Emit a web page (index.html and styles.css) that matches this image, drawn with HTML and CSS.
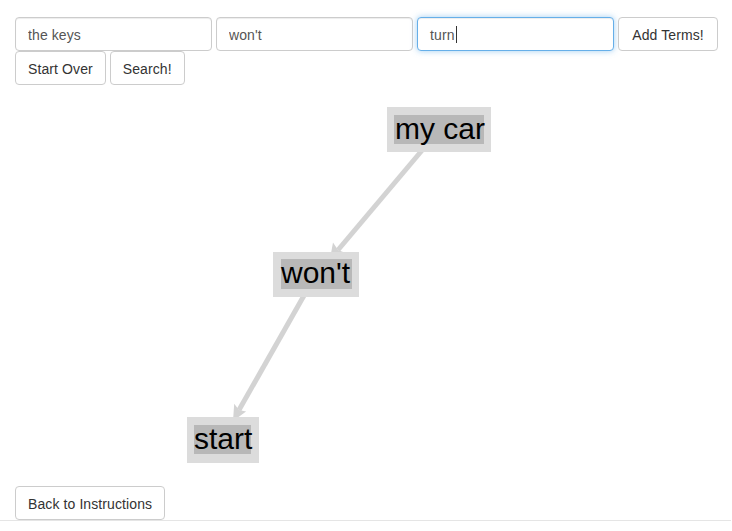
FILE: index.html
```html
<!DOCTYPE html>
<html>
<head>
<meta charset="utf-8">
<link rel="stylesheet" href="styles.css">
</head>
<body>
<div class="controls">
  <div class="row terms">
    <input class="field" type="text" value="the keys">
    <input class="field" type="text" value="won't">
    <div class="field focused">turn<span class="caret"></span></div>
    <button class="btn wide">Add Terms!</button>
  </div>
  <div class="row actions">
    <button class="btn">Start Over</button>
    <button class="btn">Search!</button>
  </div>
</div>
<svg class="graph" width="732" height="401" viewBox="0 85 732 401" xmlns="http://www.w3.org/2000/svg">
  <g class="edge">
    <line x1="424" y1="148" x2="338" y2="250"/>
    <polygon points="330,259 345,252.8 338,250 333,242.5"/>
    <line x1="306" y1="292" x2="239" y2="410"/>
    <polygon points="233,421 246.1,411.4 239,410 234.2,403.7"/>
  </g>
  <g class="node">
    <rect class="outer" x="387" y="107" width="104" height="45"/>
    <rect class="inner" x="394" y="115" width="90" height="29"/>
    <text x="395" y="139">my car</text>
  </g>
  <g class="node">
    <rect class="outer" x="273" y="252" width="86" height="45"/>
    <rect class="inner" x="281" y="259" width="71" height="30"/>
    <text x="281" y="283">won't</text>
  </g>
  <g class="node">
    <rect class="outer" x="187" y="417" width="72" height="46"/>
    <rect class="inner" x="194" y="425" width="57" height="29"/>
    <text x="194" y="449">start</text>
  </g>
</svg>
<div class="footer">
  <button class="btn">Back to Instructions</button>
</div>
<div class="rule"></div>
</body>
</html>
```
FILE: styles.css
```css
html, body {
  margin: 0;
  padding: 0;
  background: #fff;
  overflow: hidden;
}
body {
  font-family: "Liberation Sans", Arial, sans-serif;
  font-size: 14px;
  color: #333;
}
.controls {
  padding: 17px 15px 0;
  display: flex;
  flex-direction: column;
}
.row {
  display: flex;
  gap: 4px;
}
.field {
  box-sizing: border-box;
  flex-shrink: 0;
  width: 197px;
  height: 34px;
  padding: 7px 12px 5px;
  border: 1px solid #ccc;
  border-radius: 4px;
  font-family: "Liberation Sans", Arial, sans-serif;
  font-size: 14px;
  line-height: 20px;
  letter-spacing: 0.1px;
  color: #555;
  background: #fff;
  box-shadow: inset 0 1px 1px rgba(0,0,0,.075);
  outline: none;
  margin: 0;
}
.focused {
  border-color: #66afe9;
  box-shadow: inset 0 1px 1px rgba(0,0,0,.075), 0 0 6px rgba(102,175,233,.6);
  display: flex;
  align-items: center;
  padding: 1px 12px 0;
}
.caret {
  display: inline-block;
  width: 1px;
  height: 17px;
  background: #333;
  margin-left: 1px;
}
.btn {
  box-sizing: border-box;
  flex-shrink: 0;
  height: 34px;
  padding: 7px 12px 5px;
  border: 1px solid #ccc;
  border-radius: 4px;
  background: #fff;
  color: #333;
  font-family: "Liberation Sans", Arial, sans-serif;
  font-size: 14px;
  line-height: 20px;
  letter-spacing: 0.1px;
  margin: 0;
  cursor: pointer;
}
.wide {
  width: 100px;
  padding: 7px 0 5px;
}
.graph {
  display: block;
}
.edge line {
  stroke: #d3d3d3;
  stroke-width: 5;
}
.edge polygon {
  fill: #d3d3d3;
}
.node .outer {
  fill: #dcdcdc;
}
.node .inner {
  fill: #b8b8b8;
}
.node text {
  font-family: "Liberation Sans", Arial, sans-serif;
  font-size: 30px;
  fill: #000;
}
.footer {
  padding: 0 15px;
  display: flex;
}
.rule {
  width: 731px;
  border-top: 1px solid #e5e5e5;
}
```
